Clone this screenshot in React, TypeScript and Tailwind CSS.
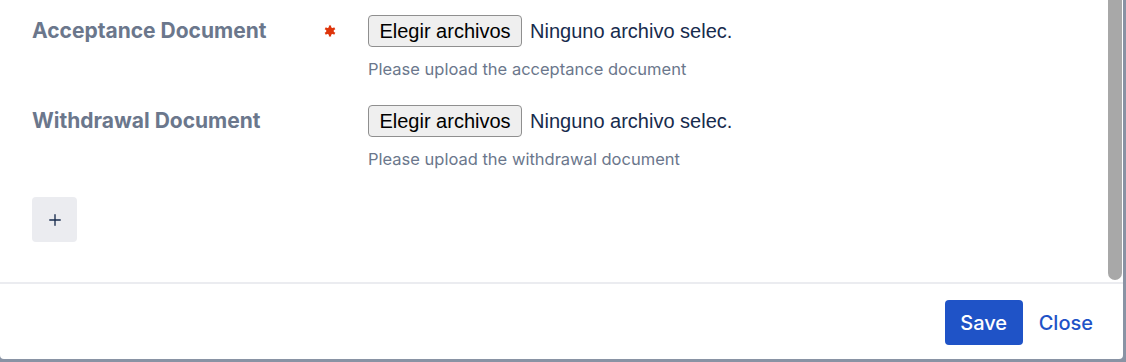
import { Plus } from "lucide-react";

interface UploadField {
  id: string;
  label: string;
  hint: string;
  required?: boolean;
}

const fields: UploadField[] = [
  {
    id: "acceptance",
    label: "Acceptance Document",
    hint: "Please upload the acceptance document",
    required: true,
  },
  {
    id: "withdrawal",
    label: "Withdrawal Document",
    hint: "Please upload the withdrawal document",
  },
];

function FilePicker() {
  return (
    <div className="flex items-center gap-[8px]">
      <button className="h-[32px] w-[154px] rounded-[4px] border border-[#8f8f8f] bg-[#efefef] font-['Liberation_Sans',Arial,sans-serif] text-[20px] text-black">
        Elegir archivos
      </button>
      <span className="font-['Liberation_Sans',Arial,sans-serif] text-[20px] text-[#172b4d]">
        Ninguno archivo selec.
      </span>
    </div>
  );
}

export default function App() {
  return (
    <div className="h-[362px] w-[1126px] overflow-hidden bg-[#8993a4] font-['Inter',sans-serif]">
      <div className="relative flex h-[359px] w-[1123px] flex-col rounded-b-[4px] bg-white">
        <div className="h-[282px] px-[32px] pt-[15px]">
          <div className="flex flex-col gap-[26px]">
            {fields.map((field) => (
              <div key={field.id} className="flex">
                <div className="flex h-[32px] w-[304px] items-center justify-between">
                  <span className="text-[21px] font-bold text-[#6b778c]">{field.label}</span>
                  {field.required && (
                    <svg width="12" height="12" viewBox="0 0 12 12">
                      <g fill="#de350b">
                        <circle cx="6" cy="6" r="3.8" />
                        <rect x="4.9" y="0.5" width="2.2" height="11" />
                        <rect x="4.9" y="0.5" width="2.2" height="11" transform="rotate(60 6 6)" />
                        <rect x="4.9" y="0.5" width="2.2" height="11" transform="rotate(120 6 6)" />
                      </g>
                    </svg>
                  )}
                </div>
                <div className="ml-[32px] flex flex-col">
                  <FilePicker />
                  <p className="mt-[12px] text-[16.5px] leading-[20px] text-[#6b778c]">{field.hint}</p>
                </div>
              </div>
            ))}
          </div>
          <button className="mt-[28px] flex h-[45px] w-[45px] items-center justify-center rounded-[4px] bg-[#ebecf0] text-[#172b4d]">
            <Plus className="h-[18px] w-[18px]" strokeWidth={1.8} />
          </button>
        </div>

        <div className="h-[2px] bg-[#ebecf0]" />

        <div className="flex flex-1 items-start justify-end gap-[16px] pr-[30px] pt-[16px]">
          <button className="h-[45px] w-[78px] rounded-[4px] bg-[#1f53c7] text-[20px] font-medium text-white">
            Save
          </button>
          <button className="h-[45px] text-[20px] font-medium text-[#1f53c7]">Close</button>
        </div>

        {/* scrollbar thumb over the body */}
        <div className="absolute right-[1px] top-0 h-[280px] w-[14px] rounded-b-full bg-[#a8a8a8]" />
      </div>
    </div>
  );
}
